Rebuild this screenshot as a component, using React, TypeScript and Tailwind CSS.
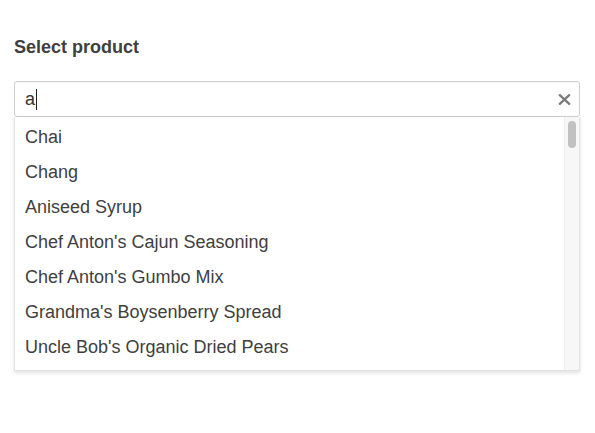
const products = [
    'Chai',
    'Chang',
    'Aniseed Syrup',
    "Chef Anton's Cajun Seasoning",
    "Chef Anton's Gumbo Mix",
    "Grandma's Boysenberry Spread",
    "Uncle Bob's Organic Dried Pears"
];

export default function App() {
    const query = 'a';

    return (
        <div className="min-h-[433px] bg-white px-[14px] pt-[36px] font-['Liberation_Sans',Arial,sans-serif] text-[#333]">
            <label className="block text-[18px] font-bold leading-[22px] text-[#404040]">
                Select product
            </label>

            <div className="mt-[23px] w-[566px]">
                {/* search box with caret */}
                <div className="flex h-[36px] items-center rounded-[3px] border border-[#cfcfcf] bg-white shadow-[inset_0_1px_1px_rgba(0,0,0,0.04)]">
                    <div className="flex flex-1 items-center pl-[10px] text-[18px] text-[#333]">
                        <span>{query}</span>
                        <span className="ml-px h-[21px] w-px bg-[#222]" />
                    </div>
                    <button
                        type="button"
                        className="mr-[5px] flex h-[20px] w-[20px] items-center justify-center"
                    >
                        <svg
                            width="13"
                            height="11"
                            viewBox="0 0 13 11"
                            fill="none"
                            stroke="#7a7a7a"
                            strokeWidth="2.3"
                            strokeLinecap="round"
                        >
                            <path d="M1.8 1.2 11.2 9.8M11.2 1.2 1.8 9.8" />
                        </svg>
                    </button>
                </div>

                {/* results */}
                <div className="flex h-[254px] border-x border-b border-[#e2e2e2] bg-white shadow-[0_2px_4px_rgba(0,0,0,0.12)]">
                    <ul className="flex-1 overflow-hidden pt-[3px]">
                        {products.map((name) => (
                            <li
                                key={name}
                                className="flex h-[35px] items-center pl-[10px] text-[18px] text-[#404040]"
                            >
                                {name}
                            </li>
                        ))}
                    </ul>
                    <div className="flex w-[15px] flex-col items-center border-l border-[#ececec] bg-[#f7f7f7] pt-[4px]">
                        <div className="h-[27px] w-[8px] rounded-full bg-[#c1c1c1]" />
                    </div>
                </div>
            </div>
        </div>
    );
}
